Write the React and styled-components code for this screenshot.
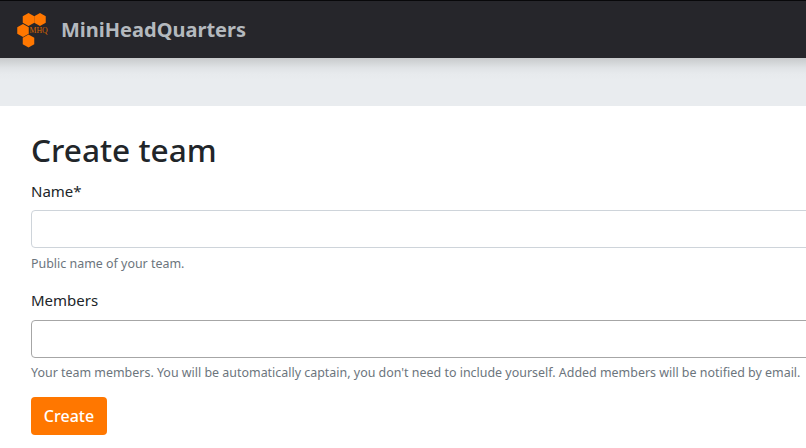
import React from "react";
import styled, { createGlobalStyle } from "styled-components";

const Global = createGlobalStyle`
  html, body { margin: 0; padding: 0; background: #fff; overflow: hidden; }
  body { font-family: "Noto Sans", "Open Sans", sans-serif; color: #212529; }
`;
const Page = styled.div`width: 806px; height: 448px; overflow: hidden;`;
const Navbar = styled.header`
  height: 57px; background: #26262b; border-top: 1px solid #08080a;
  display: flex; align-items: center; padding-left: 16px; gap: 13px;
`;
const Brand = styled.span`font-size: 20px; font-weight: 700; color: #b4b9be;`;
const Band = styled.div`
  height: 48px; background: #e9ecef;
  background-image: linear-gradient(to bottom, #c8cacc 0, #e0e3e6 10px, #e7eaed 16px, #e9ecef 22px);
`;
const Main = styled.main`padding: 20px 0 0 31px;`;
const Title = styled.h1`margin: 0 0 5px; font-size: 31.6px; line-height: 48px; font-weight: 500; color: #212529;`;
const Field = styled.div`margin-bottom: 15px;`;
const Label = styled.label`display: block; font-size: 15px; line-height: 24px; margin-bottom: ${p => p.$gap}px;`;
const Input = styled.div`
  width: 800px; height: 38px; box-sizing: border-box; background: #fff;
  border: 1px solid ${p => p.$strong ? "#a6a6a6" : "#ced4da"}; border-radius: 4px;
`;
const Help = styled.small`display: block; font-size: 12.45px; line-height: 18px; margin-top: ${p => p.$gap}px; color: #6c757d; white-space: nowrap;`;
const Button = styled.button`
  width: 76px; height: 38px; background: #ff7700; color: #fff; border: 0; border-radius: 4px;
  font: 500 16px "Noto Sans", sans-serif; padding: 0;
`;

const hex = (cx, cy) => {
  const w = 5.75, h = 6.5, s = 3.3;
  return [[cx, cy - h], [cx + w, cy - s], [cx + w, cy + s], [cx, cy + h], [cx - w, cy + s], [cx - w, cy - s]]
    .map(p => p.join(",")).join(" ");
};

const Logo = () => (
  <svg width="32" height="36" viewBox="0 0 32 36">
    <g fill="#ff7700">
      <polygon points={hex(12.5, 7.5)} />
      <polygon points={hex(24, 7.5)} />
      <polygon points={hex(7, 18.5)} />
      <polygon points={hex(12.5, 29)} />
    </g>
    <text x="13.5" y="21" fontFamily="Liberation Serif, serif" fontSize="7.8" fill="#d96500">MHQ</text>
  </svg>
);

export default function App() {
  return (
    <Page>
      <Global />
      <Navbar><Logo /><Brand>MiniHeadQuarters</Brand></Navbar>
      <Band />
      <Main>
        <Title>Create team</Title>
        <Field>
          <Label $gap={7}>Name*</Label>
          <Input />
          <Help $gap={7}>Public name of your team.</Help>
        </Field>
        <Field>
          <Label $gap={8}>Members</Label>
          <Input $strong />
          <Help $gap={6}>Your team members. You will be automatically captain, you don't need to include yourself. Added members will be notified by email.</Help>
        </Field>
        <Button>Create</Button>
      </Main>
    </Page>
  );
}
